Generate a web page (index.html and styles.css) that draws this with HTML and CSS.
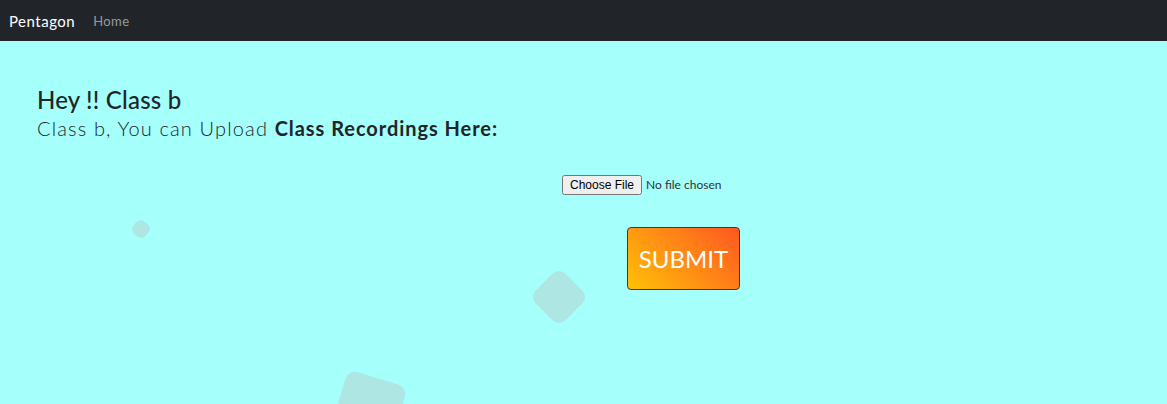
FILE: index.html
```html
<!DOCTYPE html>
<html>
<head>
<meta charset="utf-8">
<link rel="stylesheet" href="styles.css">
</head>
<body>
<nav class="navbar">
  <a class="brand" href="#">Pentagon</a>
  <a class="nav-link" href="#">Home</a>
</nav>
<main class="page">
  <div class="squares">
    <span class="sq sq1"></span>
    <span class="sq sq2"></span>
    <span class="sq sq3"></span>
  </div>
  <section class="intro">
    <h1 class="title">Hey !! Class b</h1>
    <p class="subtitle">Class b, You can Upload <strong>Class Recordings Here:</strong></p>
  </section>
  <form class="upload">
    <div class="file-row"><input type="file" class="file"></div>
    <div class="btn-row"><button type="button" class="submit">SUBMIT</button></div>
  </form>
</main>
</body>
</html>
```
FILE: styles.css
```css
* { box-sizing: border-box; }
html, body { margin: 0; height: 100%; }
body {
  font-family: "Lato", "Noto Sans", sans-serif;
  background: #a5fffa;
  color: #212529;
  overflow: hidden;
}
.navbar {
  height: 41px;
  background: #212529;
  display: flex;
  align-items: center;
  padding: 0 9px;
  gap: 18px;
}
.brand {
  color: #fff;
  text-decoration: none;
  font-size: 15px;
  letter-spacing: 0.5px;
}
.nav-link {
  color: rgba(255,255,255,.55);
  text-decoration: none;
  font-size: 13px;
  letter-spacing: 0.4px;
}
.page {
  position: relative;
  height: calc(100% - 41px);
  padding: 44px 37px 0;
  overflow: hidden;
}
.squares { position: absolute; inset: 0; pointer-events: none; }
.sq { position: absolute; background: #ade6e3; display: block; }
.sq1 { left: 133px; top: 180px; width: 16px; height: 16px; border-radius: 6px; transform: rotate(40deg); }
.sq2 { left: 538px; top: 235px; width: 42px; height: 42px; border-radius: 9px; transform: rotate(45deg); }
.sq3 { left: 338px; top: 336px; width: 62px; height: 62px; border-radius: 10px; transform: rotate(17deg); }
.intro { position: relative; }
.title {
  margin: 0;
  font-size: 24px;
  font-weight: 500;
  line-height: 30px;
  letter-spacing: 0.2px;
}
.subtitle {
  margin: 0;
  font-size: 20px;
  font-weight: 300;
  line-height: 26px;
  letter-spacing: 1.15px;
}
.subtitle strong { font-weight: 700; letter-spacing: 0.95px; }
.upload { position: relative; margin-top: 32px; }
.file-row { padding-left: 525px; }
.file { font-family: "Lato", sans-serif; font-size: 12px; color: #333; }
.btn-row { padding-left: 590px; margin-top: 32px; }
.submit {
  width: 113px;
  height: 63px;
  border: 1px solid #3a3a3a;
  border-radius: 4px;
  background: linear-gradient(45deg, #ffc107, #ff5722);
  color: #fff;
  font-family: "Lato", sans-serif;
  font-size: 24px;
  padding: 0;
}
```
